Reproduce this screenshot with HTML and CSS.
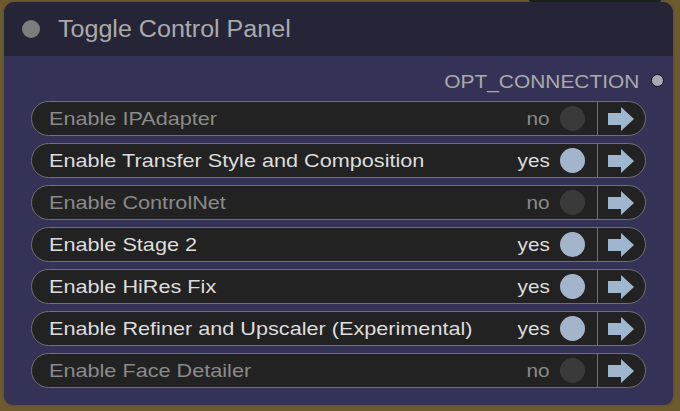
FILE: index.html
```html
<!DOCTYPE html>
<html>
<head>
<meta charset="utf-8">
<link rel="stylesheet" href="styles.css">
</head>
<body>
<div class="canvas">
  <div class="other-node"></div>
  <div class="panel">
    <div class="header">
      <span class="header-dot"></span>
      <span class="title">Toggle Control Panel</span>
    </div>
    <div class="body">
      <div class="output">
        <span class="output-label">OPT_CONNECTION</span>
        <span class="output-dot"></span>
      </div>
      <div class="rows">
        <div class="row off"><span class="label"><span class="txt">Enable IPAdapter</span></span><span class="value">no</span><span class="knob"></span><span class="go"><svg viewBox="0 0 26 24" width="26" height="24"><path d="M0 6H13V0L26 12L13 24V18H0Z"/></svg></span></div>
        <div class="row on"><span class="label"><span class="txt">Enable Transfer Style and Composition</span></span><span class="value">yes</span><span class="knob"></span><span class="go"><svg viewBox="0 0 26 24" width="26" height="24"><path d="M0 6H13V0L26 12L13 24V18H0Z"/></svg></span></div>
        <div class="row off"><span class="label"><span class="txt">Enable ControlNet</span></span><span class="value">no</span><span class="knob"></span><span class="go"><svg viewBox="0 0 26 24" width="26" height="24"><path d="M0 6H13V0L26 12L13 24V18H0Z"/></svg></span></div>
        <div class="row on"><span class="label"><span class="txt">Enable Stage 2</span></span><span class="value">yes</span><span class="knob"></span><span class="go"><svg viewBox="0 0 26 24" width="26" height="24"><path d="M0 6H13V0L26 12L13 24V18H0Z"/></svg></span></div>
        <div class="row on"><span class="label"><span class="txt">Enable HiRes Fix</span></span><span class="value">yes</span><span class="knob"></span><span class="go"><svg viewBox="0 0 26 24" width="26" height="24"><path d="M0 6H13V0L26 12L13 24V18H0Z"/></svg></span></div>
        <div class="row on"><span class="label"><span class="txt">Enable Refiner and Upscaler (Experimental)</span></span><span class="value">yes</span><span class="knob"></span><span class="go"><svg viewBox="0 0 26 24" width="26" height="24"><path d="M0 6H13V0L26 12L13 24V18H0Z"/></svg></span></div>
        <div class="row off"><span class="label"><span class="txt">Enable Face Detailer</span></span><span class="value">no</span><span class="knob"></span><span class="go"><svg viewBox="0 0 26 24" width="26" height="24"><path d="M0 6H13V0L26 12L13 24V18H0Z"/></svg></span></div>
      </div>
    </div>
  </div>
</div>
</body>
</html>
```

FILE: styles.css
```css
html, body {
  margin: 0;
  padding: 0;
}
body {
  background: #6d5a2f;
  font-family: "Liberation Sans", Arial, sans-serif;
  width: 680px;
  height: 411px;
  overflow: hidden;
}
.canvas {
  position: relative;
  width: 680px;
  height: 411px;
  padding: 2px 0 0 4px;
  box-sizing: border-box;
}
.other-node {
  position: absolute;
  left: 528px;
  top: -8px;
  width: 134px;
  height: 11px;
  background: #18261a;
  border-radius: 6px;
}
.panel {
  position: relative;
  width: 669px;
  height: 403px;
  border-radius: 11px 11px 9px 9px;
  overflow: hidden;
  background: #353257;
  box-shadow: 0 0 3px rgba(0,0,0,0.25);
  display: flex;
  flex-direction: column;
}
.header {
  height: 54px;
  background: #262537;
  display: flex;
  align-items: center;
  padding-left: 18px;
  flex-shrink: 0;
}
.header-dot {
  width: 18px;
  height: 18px;
  border-radius: 50%;
  background: #7d7d7d;
  margin-right: 18px;
}
.title {
  display: inline-block;
  color: #aaaaaa;
  font-size: 23px;
  transform: scaleX(1.09);
  transform-origin: left center;
}
.body {
  display: flex;
  flex-direction: column;
  padding: 15px 27px 0 27px;
}
.output {
  display: flex;
  justify-content: flex-end;
  align-items: center;
  height: 22px;
  margin-right: -17px;
  margin-bottom: 8px;
}
.output-label {
  display: inline-block;
  color: #aaaaaa;
  font-size: 19px;
  margin-right: 12px;
  transform: scaleX(1.1);
  transform-origin: right center;
}
.output-dot {
  width: 11px;
  height: 11px;
  border-radius: 50%;
  background: #a8a8b2;
  border: 1.5px solid #111;
  margin-top: -4px;
  margin-right: -1px;
}
.rows {
  display: flex;
  flex-direction: column;
  gap: 7px;
}
.row {
  height: 35px;
  box-sizing: border-box;
  border: 1.5px solid #707070;
  border-radius: 18px;
  background: #222222;
  display: flex;
  align-items: center;
  padding-left: 17px;
  font-size: 18.5px;
}
.label {
  flex: 1;
  white-space: nowrap;
}
.txt {
  display: inline-block;
  transform: scaleX(1.17);
  transform-origin: left center;
}
.value {
  display: inline-block;
  margin-right: 10px;
  transform: scaleX(1.12);
  transform-origin: right center;
}
.knob {
  width: 25px;
  height: 25px;
  border-radius: 50%;
  margin-right: 12px;
}
.row.on .label, .row.on .value { color: #dddddd; }
.row.off .label, .row.off .value { color: #8a8a8a; }
.row.on .knob { background: #a3b5cb; }
.row.off .knob { background: #3a3a3a; }
.go {
  align-self: stretch;
  width: 48px;
  border-left: 1.5px solid #707070;
  display: flex;
  align-items: center;
  padding-left: 10px;
  box-sizing: border-box;
}
.go svg { fill: #9fb6cf; display: block; }
```
